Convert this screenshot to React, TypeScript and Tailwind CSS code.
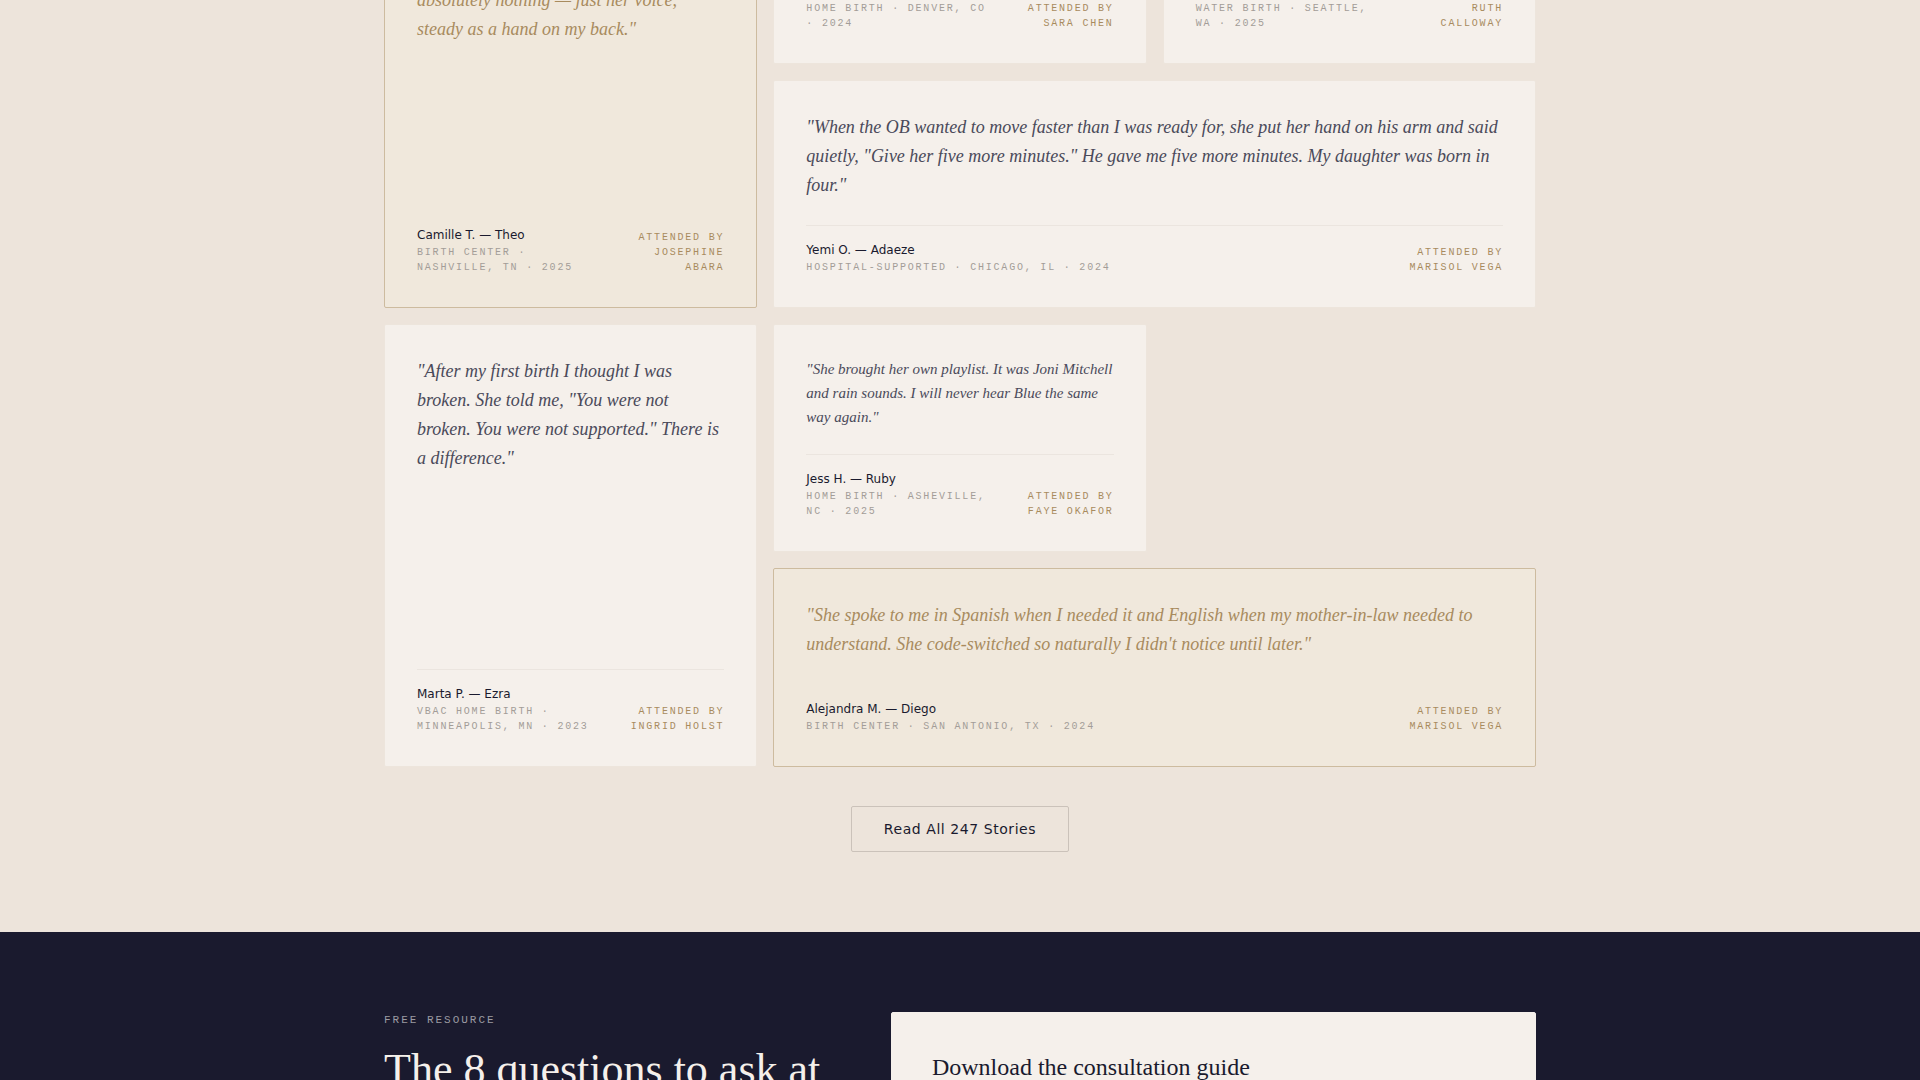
type Story = {
  quote?: string;
  name?: string;
  place: string;
  midwife: string;
  area: string;
  size?: 'small' | 'large';
  highlight?: boolean;
};

const stories: Story[] = [
  {
    quote: 'absolutely nothing — just her voice, steady as a hand on my back."',
    name: 'Camille T. — Theo',
    place: 'Birth Center · Nashville, TN · 2025',
    midwife: 'Josephine Abara',
    area: 'row-span-2',
    highlight: true,
  },
  { place: 'Home Birth · Denver, CO · 2024', midwife: 'Sara Chen', area: '' },
  { place: 'Water Birth · Seattle, WA · 2025', midwife: 'Ruth Calloway', area: '' },
  {
    quote:
      '"When the OB wanted to move faster than I was ready for, she put her hand on his arm and said quietly, "Give her five more minutes." He gave me five more minutes. My daughter was born in four."',
    name: 'Yemi O. — Adaeze',
    place: 'Hospital-Supported · Chicago, IL · 2024',
    midwife: 'Marisol Vega',
    area: 'col-span-2',
  },
  {
    quote:
      '"After my first birth I thought I was broken. She told me, "You were not broken. You were not supported." There is a difference."',
    name: 'Marta P. — Ezra',
    place: 'VBAC Home Birth · Minneapolis, MN · 2023',
    midwife: 'Ingrid Holst',
    area: 'row-span-2',
  },
  {
    quote:
      '"She brought her own playlist. It was Joni Mitchell and rain sounds. I will never hear Blue the same way again."',
    name: 'Jess H. — Ruby',
    place: 'Home Birth · Asheville, NC · 2025',
    midwife: 'Faye Okafor',
    area: '',
    size: 'small',
  },
  {
    quote:
      '"She spoke to me in Spanish when I needed it and English when my mother-in-law needed to understand. She code-switched so naturally I didn\'t notice until later."',
    name: 'Alejandra M. — Diego',
    place: 'Birth Center · San Antonio, TX · 2024',
    midwife: 'Marisol Vega',
    area: 'col-span-2 col-start-2',
    highlight: true,
  },
];

const mono =
  "font-['Liberation_Mono',monospace] text-[10px] leading-[15px] tracking-[0.18em] uppercase";

function StoryCard({ story }: { story: Story }) {
  const { quote, name, place, midwife, area, size, highlight } = story;
  return (
    <article
      className={`flex flex-col justify-end rounded-xs border p-8 ${area} ${
        highlight ? 'border-[#cdbb9f] bg-[#f0e8dc]' : 'border-[#ede5dc] bg-[#f5f0eb]'
      }`}
    >
      {quote && (
        <blockquote
          className={`font-['Liberation_Serif',serif] italic ${
            size === 'small' ? 'text-[15px] leading-6' : 'text-[18px] leading-[29px]'
          } ${highlight ? 'text-[#a88b5e]' : 'text-[#4a4a5a]'}`}
        >
          {quote}
        </blockquote>
      )}
      <footer
        className={`mt-auto flex items-end gap-4 border-t pt-3.5 ${
          highlight ? 'border-transparent' : 'border-[#ebe5df]'
        }`}
      >
        <div className="flex-1">
          {name && (
            <p className="font-['DejaVu_Sans',sans-serif] text-[12px] leading-5 text-[#1a1a2e]">{name}</p>
          )}
          <p className={`${mono} text-[#a39d98]`}>{place}</p>
        </div>
        <p className={`${mono} w-25 text-right text-[#a88b5e]`}>Attended by {midwife}</p>
      </footer>
    </article>
  );
}

export default function App() {
  return (
    <div className="h-screen overflow-hidden bg-[#ede4db]">
      <section className="-mt-[47px] px-6 pb-20">
        <div className="mx-auto max-w-6xl">
          <div className="grid grid-cols-3 grid-rows-[111px_minmax(228px,auto)_minmax(228px,auto)_minmax(199px,auto)] gap-4">
            {stories.map((story) => (
              <StoryCard key={story.place} story={story} />
            ))}
          </div>
          <div className="mt-[39px] flex justify-center">
            <button
              type="button"
              className="rounded-xs border border-[#cbc2ba] px-8 py-3 font-['DejaVu_Sans',sans-serif] text-[14px] leading-5 tracking-[0.04em] text-[#1a1a2e]"
            >
              Read All 247 Stories
            </button>
          </div>
        </div>
      </section>

      <section className="bg-[#1a1a2e] px-6 py-20">
        <div className="mx-auto flex max-w-6xl gap-16">
          <div className="flex-1">
            <p className="font-['Liberation_Mono',monospace] text-[11px] leading-4 tracking-[0.18em] text-[#9b9aa2] uppercase">
              Free Resource
            </p>
            <h2 className="mt-4 font-['Liberation_Serif',serif] text-[44px] leading-[52px] text-[#f5f0eb]">
              The 8 questions to ask at
            </h2>
          </div>
          <div className="w-[56%] rounded-xs border border-[#f5f0eb] bg-[#f5f0eb] p-10">
            <h3 className="font-['Liberation_Serif',serif] text-[24px] leading-7 text-[#1a1a2e]">
              Download the consultation guide
            </h3>
          </div>
        </div>
      </section>
    </div>
  );
}
